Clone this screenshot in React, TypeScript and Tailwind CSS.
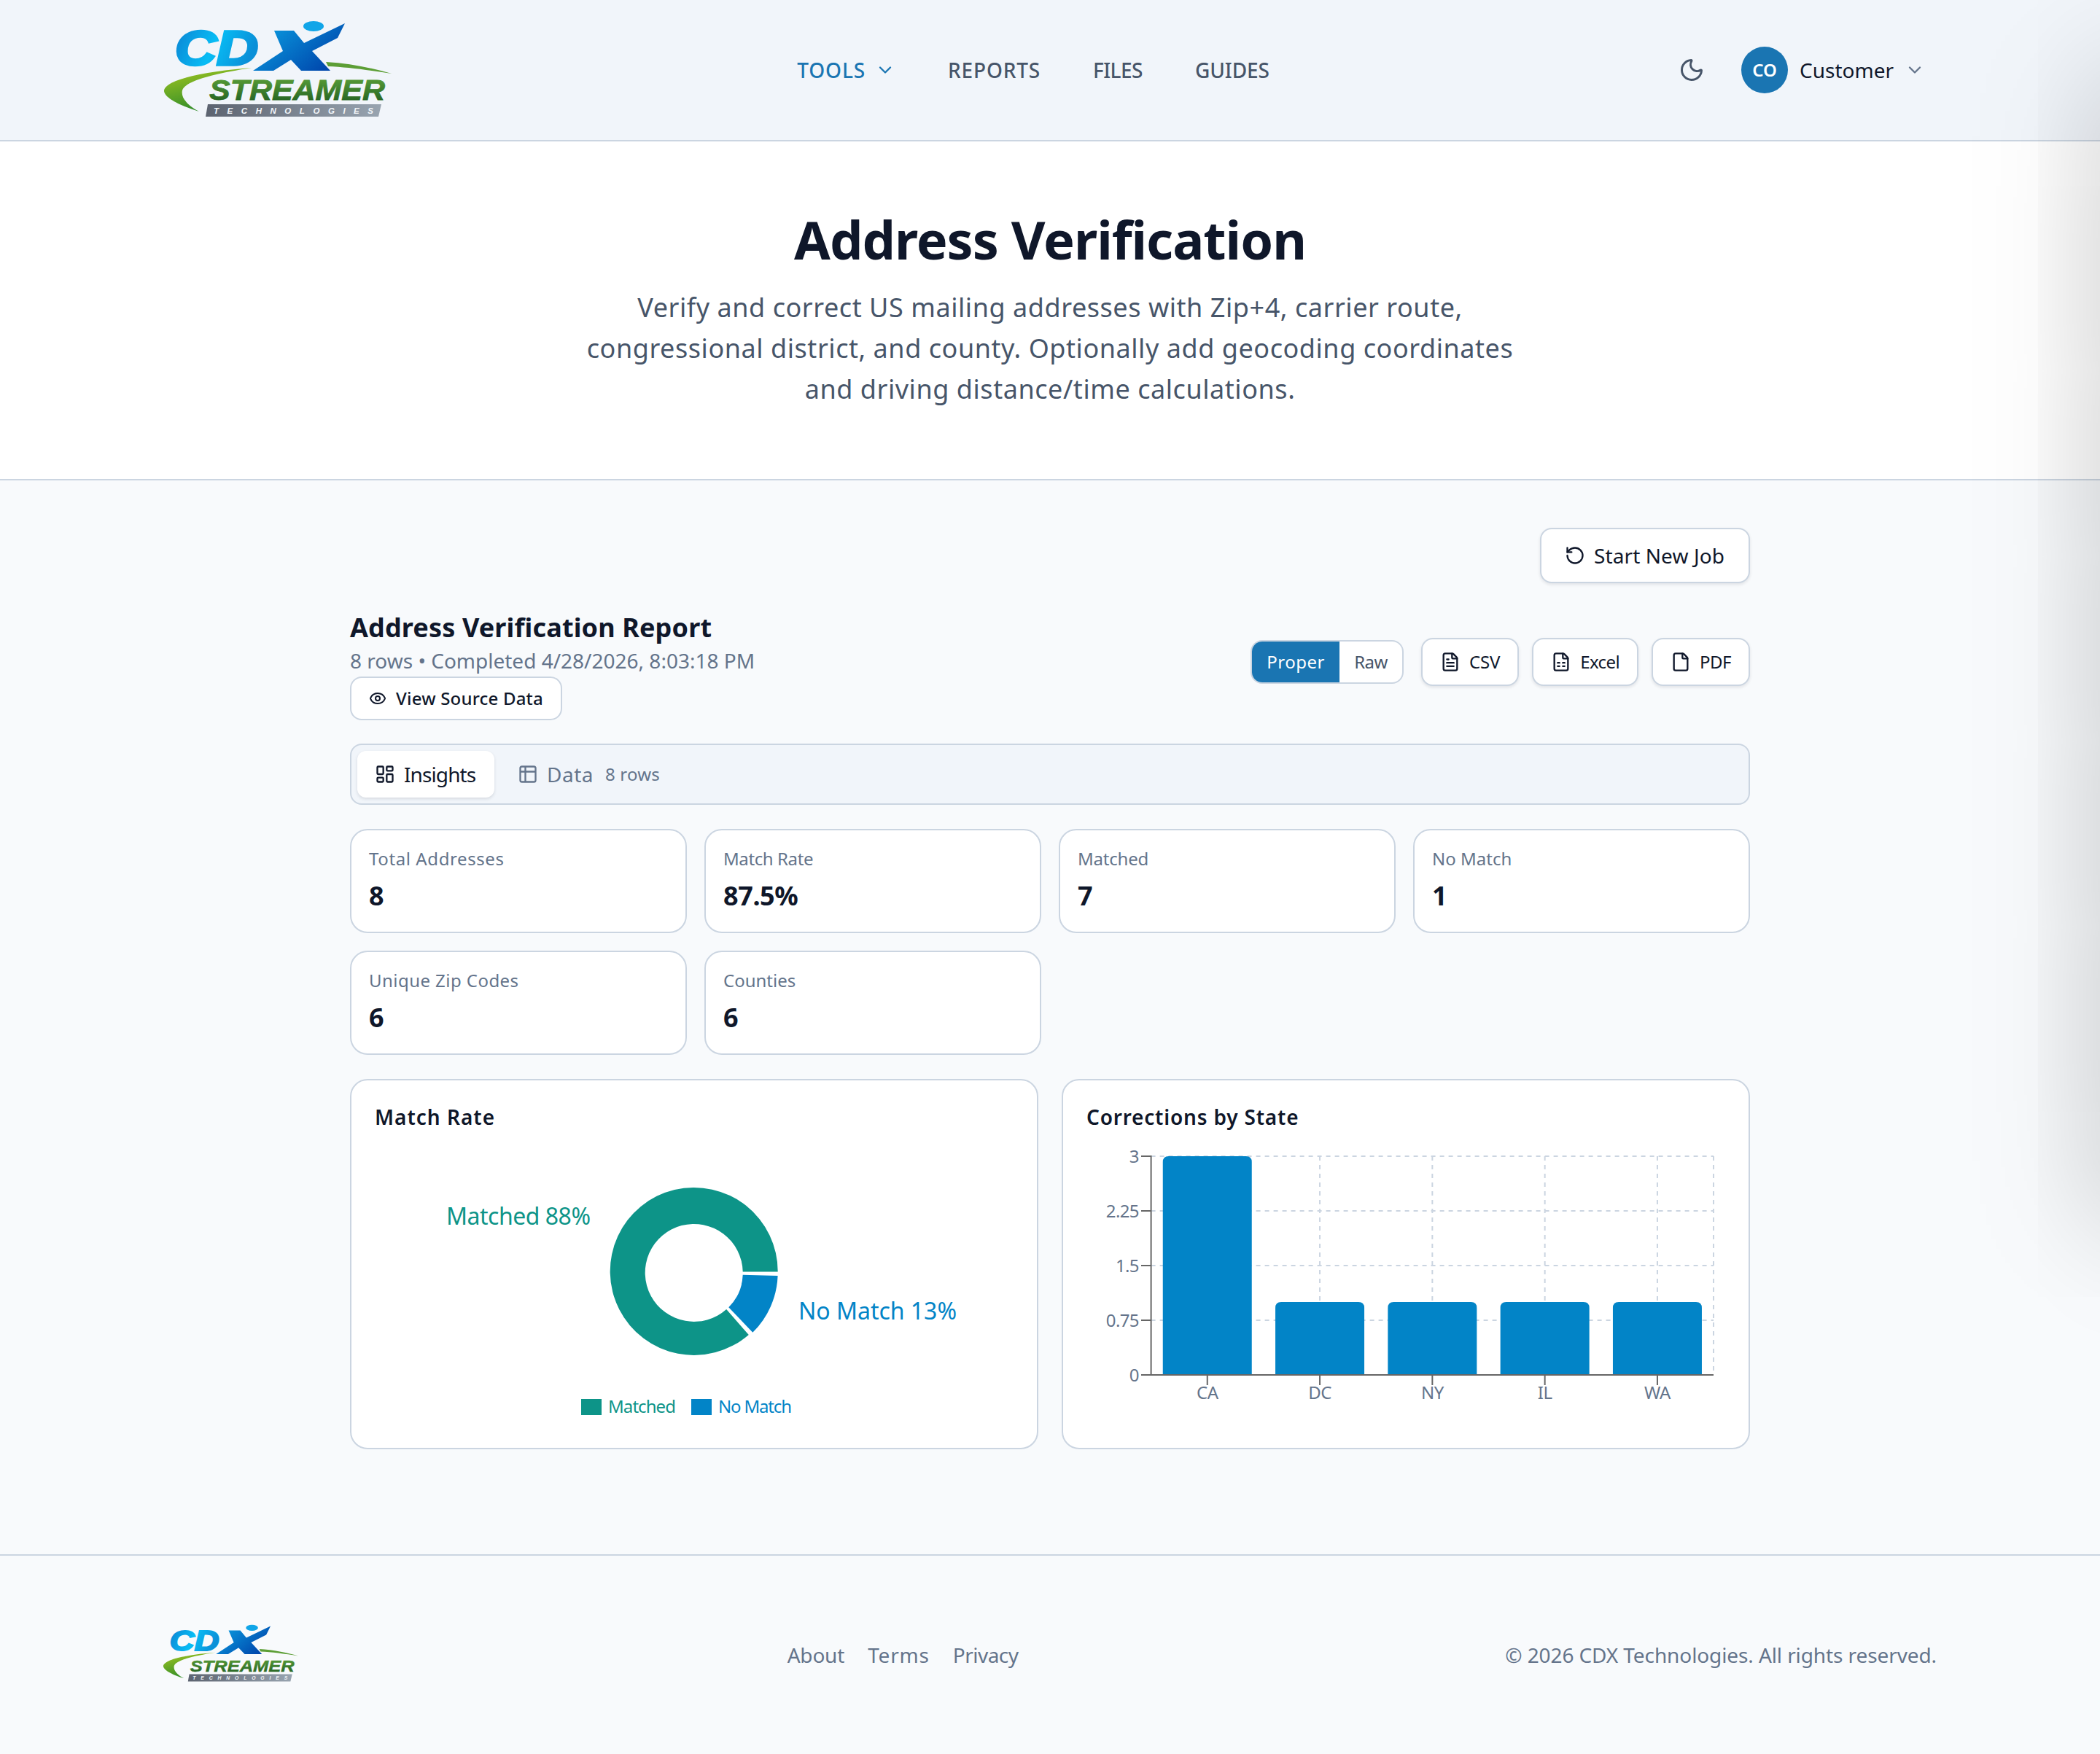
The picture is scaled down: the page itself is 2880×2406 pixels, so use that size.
import { ChevronDown, Eye, File, FileSpreadsheet, FileText, LayoutDashboard, Moon, RotateCcw, Table2 } from 'lucide-react'

const noto = 'font-["Noto_Sans",sans-serif]'

function Logo({ id, className }: { id: string; className: string }) {
  return (
    <svg viewBox="220 28 322 136" className={className}>
      <defs>
        <linearGradient id={`${id}-cd`} x1="0" y1="0" x2="1" y2="0.3">
          <stop offset="0" stopColor="#0b7fd0" />
          <stop offset="0.55" stopColor="#08bdf5" />
          <stop offset="1" stopColor="#0a90d8" />
        </linearGradient>
        <linearGradient id={`${id}-x`} x1="0" y1="0" x2="1" y2="0.6">
          <stop offset="0" stopColor="#0ba6e6" />
          <stop offset="1" stopColor="#0048ad" />
        </linearGradient>
        <linearGradient id={`${id}-sw`} x1="0" y1="0" x2="0.4" y2="1">
          <stop offset="0" stopColor="#a6c81f" />
          <stop offset="1" stopColor="#2e8b2a" />
        </linearGradient>
        <linearGradient id={`${id}-st`} x1="0" y1="0" x2="0" y2="1">
          <stop offset="0" stopColor="#5ea33a" />
          <stop offset="1" stopColor="#1c5a1f" />
        </linearGradient>
        <linearGradient id={`${id}-bar`} x1="0" y1="0" x2="1" y2="0">
          <stop offset="0" stopColor="#5c6370" />
          <stop offset="1" stopColor="#98a4b0" />
        </linearGradient>
      </defs>
      <text x="240" y="89" fontFamily="Liberation Sans" fontWeight="700" fontStyle="italic" fontSize="66" textLength="114" lengthAdjust="spacingAndGlyphs" fill={`url(#${id}-cd)`} stroke={`url(#${id}-cd)`} strokeWidth="3.5">CD</text>
      <path d="M347 97 L388 70 L376 42 L403 42 L417 59 L473 32 L463 52 L428 70 L453 97 L413 97 L399 82 L375 97 Z" fill={`url(#${id}-x)`} />
      <ellipse cx="430" cy="36" rx="14" ry="7" fill="#10a5e8" />
      <path d="M345 93 C290 97 225 108 225 125 C226 135 250 146 273 153 C255 143 248 133 250 124 C254 110 300 100 345 93 Z" fill={`url(#${id}-sw)`} />
      <path d="M447 85 C480 87 510 93 537 101 C505 96 475 92 450 91 Z" fill="#5c9e35" />
      <text x="287" y="137" fontFamily="Liberation Sans" fontWeight="700" fontStyle="italic" fontSize="38" textLength="241" lengthAdjust="spacingAndGlyphs" fill={`url(#${id}-st)`} stroke={`url(#${id}-st)`} strokeWidth="0.8">STREAMER</text>
      <polygon points="285,143 523,143 519,160 282,160" fill={`url(#${id}-bar)`} />
      <text x="293" y="156" fontFamily="Liberation Sans" fontWeight="700" fontStyle="italic" fontSize="11.5" textLength="219" fill="#f1f5f9">TECHNOLOGIES</text>
    </svg>
  )
}

function Header() {
  return (
    <header className="h-[194px] border-b-2 border-[#cbd5e1] bg-[#f1f5fa]">
      <div className="mx-auto flex h-full max-w-[2560px] items-center justify-between px-16">
        <Logo id="top" className="-ml-[4px] h-[136px] w-[322px]" />
        <nav className="-ml-[10px] flex items-center gap-[72px] text-[28px] font-medium text-[#475569]">
          <span className="flex items-center gap-[13px] tracking-[0.9px] text-[#1a75b2]">TOOLS <ChevronDown size={28} strokeWidth={2} /></span>
          <span className="tracking-[0.8px]">REPORTS</span>
          <span className="tracking-[-0.5px]">FILES</span>
          <span className="tracking-[-0.1px]">GUIDES</span>
        </nav>
        <div className="flex items-center">
          <Moon size={36} strokeWidth={2} className="text-[#475569]" />
          <span className="ml-[50px] flex size-[64px] items-center justify-center rounded-full bg-[#1a75b2] text-[24px] font-semibold text-white">CO</span>
          <span className="ml-[16px] text-[28px] text-[#0f172a]">Customer</span>
          <ChevronDown size={28} strokeWidth={2} className="ml-[15px] mr-[16px] text-[#64748b]" />
        </div>
      </div>
    </header>
  )
}

function Hero() {
  return (
    <section className="flex h-[465px] flex-col items-center border-b-2 border-[#cbd5e1] bg-white pt-[94px]">
      <h1 className="text-[72px] font-bold leading-[80px] tracking-[-1px] text-[#0f172a]">Address Verification</h1>
      <p className="mt-[26px] max-w-[1344px] text-center text-[36px] leading-[56px] tracking-[0.55px] text-[#475569]">
        Verify and correct US mailing addresses with Zip+4, carrier route, congressional district, and county. Optionally add geocoding coordinates and driving distance/time calculations.
      </p>
    </section>
  )
}

function ActionButton({ icon, label, className }: { icon: React.ReactNode; label: string; className: string }) {
  return (
    <button className={`flex h-[66px] items-center gap-[12px] rounded-[16px] border-2 border-[#cbd5e1] bg-white px-[24px] text-[24px] text-[#0f172a] shadow-[0_2px_4px_rgba(15,23,42,0.1)] ${className}`}>
      {icon}
      {label}
    </button>
  )
}

function ReportHeader() {
  return (
    <div className="mt-[36px] flex items-start justify-between">
      <div>
        <h2 className="text-[36px] font-bold leading-[50px] tracking-[0.14px] text-[#0f172a]">Address Verification Report</h2>
        <p className="text-[28px] leading-[40px] text-[#64748b]">8 rows • Completed 4/28/2026, 8:03:18 PM</p>
        <button className="mt-[2px] flex h-[60px] items-center gap-[13px] rounded-[16px] border-2 border-[#cbd5e1] bg-white px-[24px] text-[24px] font-medium tracking-[0.2px] text-[#0f172a]">
          <Eye size={24} strokeWidth={2} />
          View Source Data
        </button>
      </div>
      <div className="mt-[39px] flex items-center">
        <div className="flex h-[60px] overflow-hidden rounded-[16px] border-2 border-[#cbd5e1] bg-white text-[24px]">
          <span className="flex w-[120px] items-center justify-center bg-[#1a75b2] tracking-[0.5px] text-white">Proper</span>
          <span className="flex w-[86px] items-center justify-center tracking-[-0.5px] text-[#475569]">Raw</span>
        </div>
        <div className="ml-[24px] flex items-center gap-[18px]">
          <ActionButton icon={<FileText size={28} strokeWidth={2} />} label="CSV" className="tracking-[-0.2px]" />
          <ActionButton icon={<FileSpreadsheet size={28} strokeWidth={2} />} label="Excel" className="tracking-[-0.6px]" />
          <ActionButton icon={<File size={28} strokeWidth={2} />} label="PDF" className="tracking-[-0.5px]" />
        </div>
      </div>
    </div>
  )
}

function Tabs() {
  return (
    <div className="mt-[32px] flex h-[84px] items-center rounded-[16px] border-2 border-[#cbd5e1] bg-[#f1f5fa] px-[8px]">
      <div className="flex h-[64px] w-[188px] items-center gap-[12px] rounded-[12px] bg-white px-[24px] text-[28px] tracking-[-0.9px] text-[#0f172a] shadow-[0_2px_4px_rgba(15,23,42,0.12)]">
        <LayoutDashboard size={28} strokeWidth={2} />
        Insights
      </div>
      <div className="ml-[32px] flex items-center text-[#64748b]">
        <Table2 size={28} strokeWidth={2} />
        <span className="ml-[12px] text-[28px] tracking-[0.5px]">Data</span>
        <span className="ml-[16px] text-[24px] tracking-[0.2px]">8 rows</span>
      </div>
    </div>
  )
}

const stats = [
  { label: 'Total Addresses', value: '8', tracking: 'tracking-[0.6px]' },
  { label: 'Match Rate', value: '87.5%', tracking: 'tracking-[-0.4px]' },
  { label: 'Matched', value: '7', tracking: 'tracking-[-0.2px]' },
  { label: 'No Match', value: '1', tracking: 'tracking-[0px]' },
  { label: 'Unique Zip Codes', value: '6', tracking: 'tracking-[0.45px]' },
  { label: 'Counties', value: '6', tracking: 'tracking-[0px]' },
]

function StatCards() {
  return (
    <div className="mt-[33px] grid grid-cols-4 gap-[24px]">
      {stats.map(x => (
        <div key={x.label} className="h-[143px] rounded-[24px] border-2 border-[#cbd5e1] bg-white px-[24px] pt-[21px]">
          <div className={`text-[24px] leading-[36px] text-[#64748b] ${x.tracking}`}>{x.label}</div>
          <div className="mt-[9px] text-[36px] font-bold leading-[48px] tracking-[-0.4px] text-[#0f172a]">{x.value}</div>
        </div>
      ))}
    </div>
  )
}

function DonutChart() {
  return (
    <svg viewBox="480 1560 944 428" className="absolute -bottom-[2px] -left-[2px] h-[428px] w-[944px]">
      <path d="M1026.8 1831 A115 115 0 1 1 1066.7 1744.5 L1018.7 1744.5 A67 67 0 1 0 996.2 1796 Z" fill="#0d9488" />
      <path d="M1066.6 1750 A115 115 0 0 1 1032.3 1827.7 L999.3 1793.3 A67 67 0 0 0 1018.7 1748.7 Z" fill="#0284c7" />
      <g fontFamily="Noto Sans">
        <text x="612" y="1680" fontSize="32" textLength="198" fill="#0d9488">Matched 88%</text>
        <text x="1095" y="1810" fontSize="32" textLength="217" fill="#0284c7">No Match 13%</text>
        <rect x="797" y="1919" width="28" height="22" fill="#0d9488" />
        <text x="834" y="1938" fontSize="24" textLength="93" fill="#0d9488">Matched</text>
        <rect x="948" y="1919" width="28" height="22" fill="#0284c7" />
        <text x="985" y="1938" fontSize="24" textLength="101" fill="#0284c7">No Match</text>
      </g>
    </svg>
  )
}

const bars = [
  { label: 'CA', value: 3 },
  { label: 'DC', value: 1 },
  { label: 'NY', value: 1 },
  { label: 'IL', value: 1 },
  { label: 'WA', value: 1 },
]
const yTicks = [
  { label: '3', y: 1586 },
  { label: '2.25', y: 1661 },
  { label: '1.5', y: 1736 },
  { label: '0.75', y: 1811 },
  { label: '0', y: 1886 },
]

function BarChart() {
  const left = 1578.6
  const band = 154.3
  return (
    <svg viewBox="1456 1560 944 428" className="absolute -bottom-[2px] -left-[2px] h-[428px] w-[944px]">
      <g stroke="#cbd5e1" strokeWidth="2" strokeDasharray="6 6" fill="none">
        {yTicks.slice(0, 4).map(t => <line key={t.y} x1={left} x2={2350} y1={t.y} y2={t.y} />)}
        {bars.map((_, i) => <line key={i} x1={left + band * (i + 0.5)} x2={left + band * (i + 0.5)} y1={1586} y2={1886} />)}
        <line x1={2350} x2={2350} y1={1586} y2={1886} />
      </g>
      {bars.map((x, i) => {
        const cx = left + band * (i + 0.5)
        const top = 1886 - x.value * 100
        return <path key={x.label} d={`M${cx - 61} 1886 V${top + 8} Q${cx - 61} ${top} ${cx - 53} ${top} H${cx + 53} Q${cx + 61} ${top} ${cx + 61} ${top + 8} V1886 Z`} fill="#0284c7" />
      })}
      <g stroke="#666" strokeWidth="2" fill="none">
        <line x1={left} x2={left} y1={1585} y2={1887} />
        <line x1={left} x2={2350} y1={1886} y2={1886} />
        {yTicks.map(t => <line key={t.y} x1={1565} x2={left} y1={t.y} y2={t.y} />)}
        {bars.map((_, i) => <line key={i} x1={left + band * (i + 0.5)} x2={left + band * (i + 0.5)} y1={1886} y2={1900} />)}
      </g>
      <g fontFamily="Noto Sans" fontSize="24" fill="#64748b">
        {yTicks.map(t => <text key={t.y} x={1562} y={t.y + 9} textAnchor="end" letterSpacing="-0.6">{t.label}</text>)}
        {bars.map((x, i) => <text key={x.label} x={left + band * (i + 0.5)} y={1919} textAnchor="middle" letterSpacing="-0.5">{x.label}</text>)}
      </g>
    </svg>
  )
}

function ChartCard({ title, tracking, children }: { title: string; tracking: string; children: React.ReactNode }) {
  return (
    <div className="relative h-[508px] rounded-[24px] border-2 border-[#cbd5e1] bg-white px-[32px] pt-[30px]">
      <h3 className={`text-[28px] font-semibold leading-[40px] text-[#0f172a] ${tracking}`}>{title}</h3>
      {children}
    </div>
  )
}

function Footer() {
  return (
    <footer className="h-[274px] border-t-2 border-[#cbd5e1] bg-[#f8fafc]">
      <div className="mx-auto flex h-full max-w-[2560px] items-center justify-between px-16 text-[28px] text-[#64748b]">
        <Logo id="bottom" className="-ml-[3px] -mt-[4px] h-[81px] w-[191px]" />
        <div className="flex gap-[32px]">
          <span className="tracking-[-0.2px]">About</span>
          <span className="tracking-[0.8px]">Terms</span>
          <span className="tracking-[-0.5px]">Privacy</span>
        </div>
        <span className="tracking-[-0.1px]">© 2026 CDX Technologies. All rights reserved.</span>
      </div>
    </footer>
  )
}

export default function App() {
  return (
    <div className={`relative min-h-[2406px] overflow-hidden bg-[#f8fafc] ${noto}`}>
      <Header />
      <Hero />
      <main className="mx-auto h-[1473px] w-[1920px] pt-[65px]">
        <div className="flex justify-end">
          <button className="flex h-[76px] w-[288px] items-center gap-[12px] rounded-[16px] border-2 border-[#cbd5e1] bg-white px-[32px] text-[28px] tracking-[0.1px] text-[#0f172a] shadow-[0_2px_4px_rgba(15,23,42,0.1)]">
            <RotateCcw size={28} strokeWidth={2} />
            Start New Job
          </button>
        </div>
        <ReportHeader />
        <Tabs />
        <StatCards />
        <div className="mt-[33px] grid grid-cols-2 gap-[32px]">
          <ChartCard title="Match Rate" tracking="tracking-[1px]"><DonutChart /></ChartCard>
          <ChartCard title="Corrections by State" tracking="tracking-[0.8px]"><BarChart /></ChartCard>
        </div>
      </main>
      <Footer />
      {/* shadow of the closed side panel, off the right edge */}
      <div className="pointer-events-none absolute left-full top-[40px] h-[1600px] w-[400px] shadow-[0_50px_180px_-10px_rgba(0,0,0,0.27)]" />
    </div>
  )
}
